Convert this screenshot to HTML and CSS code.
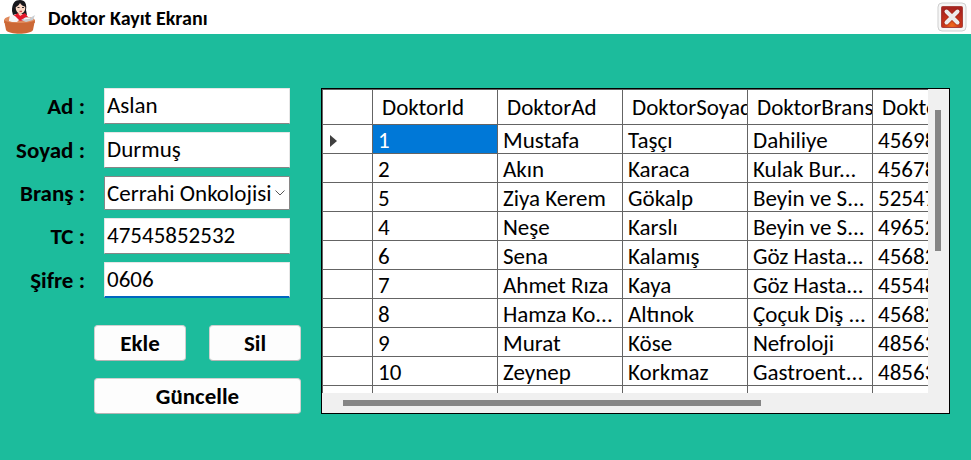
FILE: index.html
```html
<!DOCTYPE html>
<html lang="tr">
<head>
<meta charset="utf-8">
<title>Doktor Kayıt Ekranı</title>
<link rel="stylesheet" href="styles.css">
</head>
<body>
<header class="titlebar">
  <svg class="logo" viewBox="0 0 32 34" aria-hidden="true">
    <path d="M8 11c0-8 3-11 8-11s7 4 6 10l1 5-4-1h-7l-3 1z" fill="#17171c"/>
    <ellipse cx="16.500" cy="8" rx="4.800" ry="5.500" fill="#fbd9c6"/>
    <path d="M11 7c2 0 4-2 5-4 1 2 3 3 6 4-1-5-3-6-6-6s-5 2-5 6z" fill="#17171c"/>
    <path d="M13.500 7.500h2M18 7.500h2" stroke="#333"/>
    <path d="M15.500 11.300h2.500" stroke="#c33"/>
    <path d="M9 16l5-3 3 2 4-2 3 4-2 5H10z" fill="#e5182b"/>
    <path d="M14 12h4l-1 4-2-1z" fill="#f8cdb8"/>
    <path d="M0 20c1-3 6-4 9-4l3 4 7 1 4-4c4 0 7 1 8 3v3H0z" fill="#e08a5c"/>
    <path d="M0 20c3 4 28 4 31 0l-2 10c-3 5-24 5-27 0z" fill="#cc6836"/>
    <path d="M5 20l1-5 5 1 4 4-2 2-5 0-3-1z" fill="#f4f4f6"/>
    <path d="M17 20l5-3 4 1 5-3-2 5-7 2z" fill="#c9cdd2"/>
    <path d="M20 19l6-1" stroke="#fff"/>
  </svg>
  <h1 class="title">Doktor Kayıt Ekranı</h1>
  <button class="close" type="button" aria-label="Kapat">
    <svg viewBox="0 0 30 30" aria-hidden="true">
      <defs>
        <radialGradient id="red" cx=".5" cy=".9" r=".8">
          <stop offset="0" stop-color="#f06a1c"/>
          <stop offset=".5" stop-color="#c8341a"/>
          <stop offset="1" stop-color="#a92420"/>
        </radialGradient>
      </defs>
      <rect x="1" y="1" width="28" height="28" rx="4" fill="#f6f6f6" stroke="#cfcfcf"/>
      <rect x="4.500" y="4.500" width="21" height="21" rx="1" fill="url(#red)" stroke="#a8423c"/>
      <path d="M9.500 9.500l11 11M20.500 9.500l-11 11" stroke="#8e2018" stroke-width="6" stroke-linecap="round" opacity=".4"/>
      <path d="M9.500 9.500l11 11M20.500 9.500l-11 11" stroke="#ececec" stroke-width="4" stroke-linecap="round"/>
    </svg>
  </button>
</header>
<main class="content">
  <form class="form">
    <div class="fields">
      <label for="ad">Ad :</label>
      <input class="field" id="ad" type="text" value="Aslan">
      <label for="soyad">Soyad :</label>
      <input class="field" id="soyad" type="text" value="Durmuş">
      <label for="brans">Branş :</label>
      <div class="combo">
        <select class="select" id="brans"><option>Cerrahi Onkolojisi</option></select>
        <svg class="chevron" viewBox="0 0 10 6" aria-hidden="true"><path d="M.5.500L5 5 9.500.500" fill="none" stroke="#555"/></svg>
      </div>
      <label for="tc">TC :</label>
      <input class="field" id="tc" type="text" value="47545852532">
      <label for="sifre">Şifre :</label>
      <input class="field active" id="sifre" type="text" value="0606">
    </div>
    <div class="actions">
      <button class="button" type="button">Ekle</button>
      <button class="button" type="button">Sil</button>
      <button class="button wide" type="button">Güncelle</button>
    </div>
  </form>
  <section class="grid">
    <div class="viewport">
      <table class="table">
        <colgroup><col class="col-marker"><col class="col"><col class="col"><col class="col"><col class="col"><col class="col"></colgroup>
        <thead>
          <tr><th></th><th>DoktorId</th><th>DoktorAd</th><th>DoktorSoyad</th><th>DoktorBrans</th><th>DoktorTC</th></tr>
        </thead>
        <tbody>
          <tr><td><svg class="marker" viewBox="0 0 7 12" aria-hidden="true"><path d="M0 0l7 6-7 6z" fill="#404040"/></svg></td><td class="selected">1</td><td>Mustafa</td><td>Taşçı</td><td>Dahiliye</td><td>45698</td></tr>
          <tr><td></td><td>2</td><td>Akın</td><td>Karaca</td><td>Kulak Bur...</td><td>45678</td></tr>
          <tr><td></td><td>5</td><td>Ziya Kerem</td><td>Gökalp</td><td>Beyin ve S...</td><td>52547</td></tr>
          <tr><td></td><td>4</td><td>Neşe</td><td>Karslı</td><td>Beyin ve S...</td><td>49652</td></tr>
          <tr><td></td><td>6</td><td>Sena</td><td>Kalamış</td><td>Göz Hasta...</td><td>45682</td></tr>
          <tr><td></td><td>7</td><td>Ahmet Rıza</td><td>Kaya</td><td>Göz Hasta...</td><td>45548</td></tr>
          <tr><td></td><td>8</td><td>Hamza Ko...</td><td>Altınok</td><td>Çoçuk Diş ...</td><td>45682</td></tr>
          <tr><td></td><td>9</td><td>Murat</td><td>Köse</td><td>Nefroloji</td><td>48563</td></tr>
          <tr><td></td><td>10</td><td>Zeynep</td><td>Korkmaz</td><td>Gastroent...</td><td>48563</td></tr>
          <tr><td></td><td></td><td></td><td></td><td></td><td></td></tr>
        </tbody>
      </table>
    </div>
    <div class="track-y"><div class="thumb-y"></div></div>
    <div class="track-x"><div class="thumb-x"></div></div>
  </section>
</main>
</body>
</html>
```
FILE: styles.css
```css
* { box-sizing: border-box; }

body {
  margin: 0;
  min-height: 100vh;
  background: #1cbc9c;
  color: #000;
  font: 23px/28px Carlito, Lato, "Liberation Sans", sans-serif;
}

.titlebar {
  display: flex;
  align-items: center;
  height: 34px;
  padding: 0 4px;
  background: #fff;
}

.logo { width: 32px; height: 34px; }

.title {
  flex: 1;
  margin: 0;
  padding: 2px 0 0 12px;
  font-size: 20px;
  line-height: 24px;
}

.close {
  width: 30px;
  height: 30px;
  padding: 0;
  border: 0;
  background: none;
}

.close svg { display: block; }

.content {
  display: flex;
  align-items: flex-start;
  gap: 20px;
  padding: 54px 21px 46px 0;
}

.form { width: 301px; }

.fields {
  display: grid;
  grid-template-columns: 85px 1fr;
  gap: 8px 19px;
  align-items: center;
  padding-right: 11px;
}

.fields label {
  font-weight: 700;
  text-align: right;
}

.field,
.select {
  display: block;
  width: 100%;
  height: 36px;
  padding: 0 2px 2px;
  border: 1px solid #e6e6e6;
  border-bottom-color: #868686;
  border-radius: 1px;
  background: #fff;
  color: #000;
  font: inherit;
  outline: 0;
}

.field.active { border-bottom: 2px solid #0067c0; }

.combo { position: relative; }

.select {
  height: 34px;
  padding: 0 18px 0 2px;
  border-color: #868686;
  appearance: none;
}

.chevron {
  position: absolute;
  right: 5px;
  top: 14px;
  width: 10px;
  height: 6px;
}

.actions {
  display: grid;
  grid-template-columns: 1fr 1fr;
  gap: 17px 23px;
  padding: 27px 0 0 94px;
}

.button {
  height: 36px;
  padding: 0;
  border: 1px solid #d0d0d0;
  border-bottom-color: #b4b4b4;
  border-radius: 4px;
  background: #fdfdfd;
  color: #000;
  font: inherit;
  font-weight: 700;
}

.wide { grid-column: span 2; }

.grid {
  flex: 1;
  min-width: 0;
  display: grid;
  grid-template-columns: 1fr 21px;
  grid-template-rows: 304px 20px;
  border: 1px solid #000;
  background: #f0f0f0;
}

.viewport {
  overflow: hidden;
  background: #fff;
  border-top: 1px solid #646464;
  border-left: 1px solid #646464;
}

.table {
  width: 675px;
  table-layout: fixed;
  border-spacing: 0;
}

.col-marker { width: 50px; }
.col { width: 125px; }

.table th,
.table td {
  height: 29px;
  padding: 3px 0 0 5px;
  border-right: 1px solid #646464;
  border-bottom: 1px solid #646464;
  overflow: hidden;
  line-height: 25px;
  font-weight: 400;
  text-align: left;
  white-space: nowrap;
}

.table th {
  height: 35px;
  padding: 0 0 0 9px;
}

.table .selected {
  background: #0078d7;
  color: #fff;
}

.marker {
  display: block;
  width: 7px;
  height: 12px;
  margin-left: 2px;
}

.track-y { padding: 21px 0 0 7px; }

.thumb-y {
  width: 6px;
  height: 141px;
  background: #858585;
}

.track-x {
  grid-column: span 2;
  padding: 7px 0 0 21px;
}

.thumb-x {
  width: 69%;
  height: 6px;
  background: #858585;
}
```
